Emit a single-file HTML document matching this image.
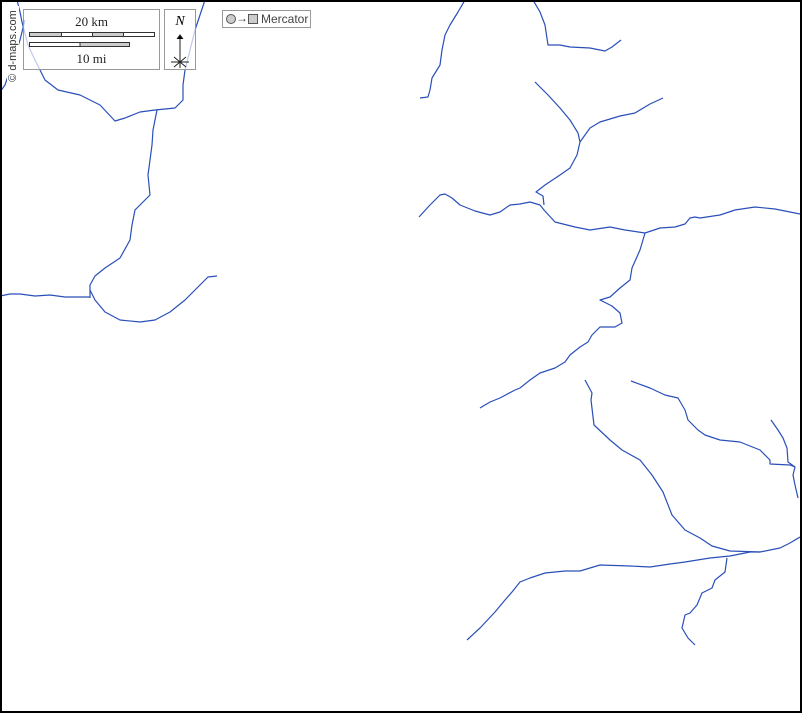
<!DOCTYPE html>
<html><head><meta charset="utf-8"><style>
html,body{margin:0;padding:0;background:#fff}
.wrap{position:relative;width:802px;height:713px;box-sizing:border-box;border:2px solid #000;overflow:hidden;font-family:"Liberation Serif",serif}
svg{position:absolute;left:-2px;top:-2px}
.box{position:absolute;background:rgba(255,255,255,.7);border:1px solid #999}
</style></head><body><div class="wrap">
<svg width="802" height="713" fill="none" stroke="#2a4fb8" stroke-width="1.2" stroke-linejoin="round">
<polyline points="17,0 20,12 22,22 28,45 35,60 45,80 58,90 80,95 100,105 115,121 125,118 140,112 155,110 175,108 183,100 183,85 185,70 190,50 195,30 200,15 205,0"/>
<polyline points="0,92 5,85 10,70 15,55 20,40 25,20"/>
<polyline points="157,110 153,130 152,145 148,175 150,195 135,210 132,225 130,240 120,258 105,268 95,276 90,285 90,298"/>
<polyline points="0,296 10,294 20,294 35,296 50,295 65,297 90,297"/>
<polyline points="90,290 95,300 105,312 120,320 140,322 155,320 170,312 185,300 200,285 208,277 217,276"/>
<polyline points="465,0 458,12 450,25 445,35 442,50 440,65 432,78 430,90 428,97 420,98"/>
<polyline points="533,0 540,12 545,25 548,45 560,45 570,47 590,48 605,51 612,47 621,40"/>
<polyline points="535,82 548,95 560,108 570,120 578,133 580,142 577,155 570,168 560,175 545,185 536,192 543,196 544,205"/>
<polyline points="580,142 590,128 600,122 620,116 635,113 650,104 663,98"/>
<polyline points="419,217 430,205 440,195 445,194 452,198 460,205 475,211 490,215 500,212 510,205 520,204 530,202 540,205 544,210 555,222 575,227 590,230 610,227 625,230 645,233 660,228 675,227 685,224 690,218 695,217 700,218 720,215 735,210 755,207 775,209 800,214"/>
<polyline points="645,233 640,250 632,268 630,280 620,288 610,297 600,300 612,306 620,313 622,323 615,327 600,327 592,335 588,342 580,347 570,355 565,362 555,368 540,373 530,380 520,388 515,390 500,398 490,402 480,408"/>
<polyline points="585,380 592,393 591,400 594,425 610,440 622,450 640,460 652,475 663,492 672,515 685,530 700,538 712,546 730,551 760,552 780,548 790,543 800,537"/>
<polyline points="631,381 650,388 665,395 678,398 685,410 688,420 698,430 705,435 720,440 740,442 760,450 770,460 770,464 790,465 795,467"/>
<polyline points="771,420 778,430 783,438 787,448 788,462 795,467 793,475 795,485 798,498"/>
<polyline points="467,640 480,628 495,612 505,600 512,592 520,582 530,578 545,573 565,571 580,571 600,565 630,566 650,567 670,564 685,562 710,558 730,556 750,552 760,552"/>
<polyline points="727,558 725,572 715,580 712,588 702,593 697,605 690,613 685,615 682,628 688,638 695,645"/>
</svg>
<div style="position:absolute;left:3px;top:8px;width:14px;height:75px;"><div style="position:absolute;left:-32px;top:30px;width:80px;transform:rotate(-90deg);font:11px 'Liberation Sans',sans-serif;color:#333;white-space:nowrap;text-align:center;background:#fff">© d-maps.com</div></div>
<div class="box" style="left:21px;top:7px;width:135px;height:59px;">
<div style="position:absolute;top:4px;width:100%;text-align:center;font-size:13px;color:#222">20 km</div>
<div style="position:absolute;left:5px;top:22px;width:124px;height:3px;border:1px solid #333;background:linear-gradient(90deg,#ccc 0 25%,#333 25% calc(25% + 1px),#fff 0 50%,#333 50% calc(50% + 1px),#ccc 0 75%,#333 75% calc(75% + 1px),#fff 0)"></div>
<div style="position:absolute;left:5px;top:32px;width:99px;height:3px;border:1px solid #333;background:linear-gradient(90deg,#fff 0 50%,#333 50% calc(50% + 1px),#ccc 0)"></div>
<div style="position:absolute;top:41px;width:100%;text-align:center;font-size:13px;color:#222">10 mi</div>
</div>
<div class="box" style="left:162px;top:7px;width:30px;height:59px;">
<div style="position:absolute;top:4px;width:100%;text-align:center;font-size:14px;font-style:italic">N</div>
<svg width="30" height="40" style="left:0;top:20px" stroke="#222" stroke-width="1"><line x1="15" y1="5" x2="15" y2="38"/><polyline points="12,9 15,5 18,9"/><line x1="6" y1="32" x2="24" y2="32"/><line x1="9" y1="27" x2="21" y2="37"/><line x1="21" y1="27" x2="9" y2="37"/></svg>
</div>
<div class="box" style="left:220px;top:8px;width:87px;height:16px;font:12px 'Liberation Sans',sans-serif;color:#444">
<span style="position:absolute;left:3px;top:3px;width:8px;height:8px;border:1px solid #555;border-radius:50%;background:#ccc"></span>
<span style="position:absolute;left:13px;top:0px">→</span>
<span style="position:absolute;left:25px;top:3px;width:8px;height:8px;border:1px solid #555;background:#ccc"></span>
<span style="position:absolute;left:38px;top:1px">Mercator</span>
</div>
</div></body></html>
